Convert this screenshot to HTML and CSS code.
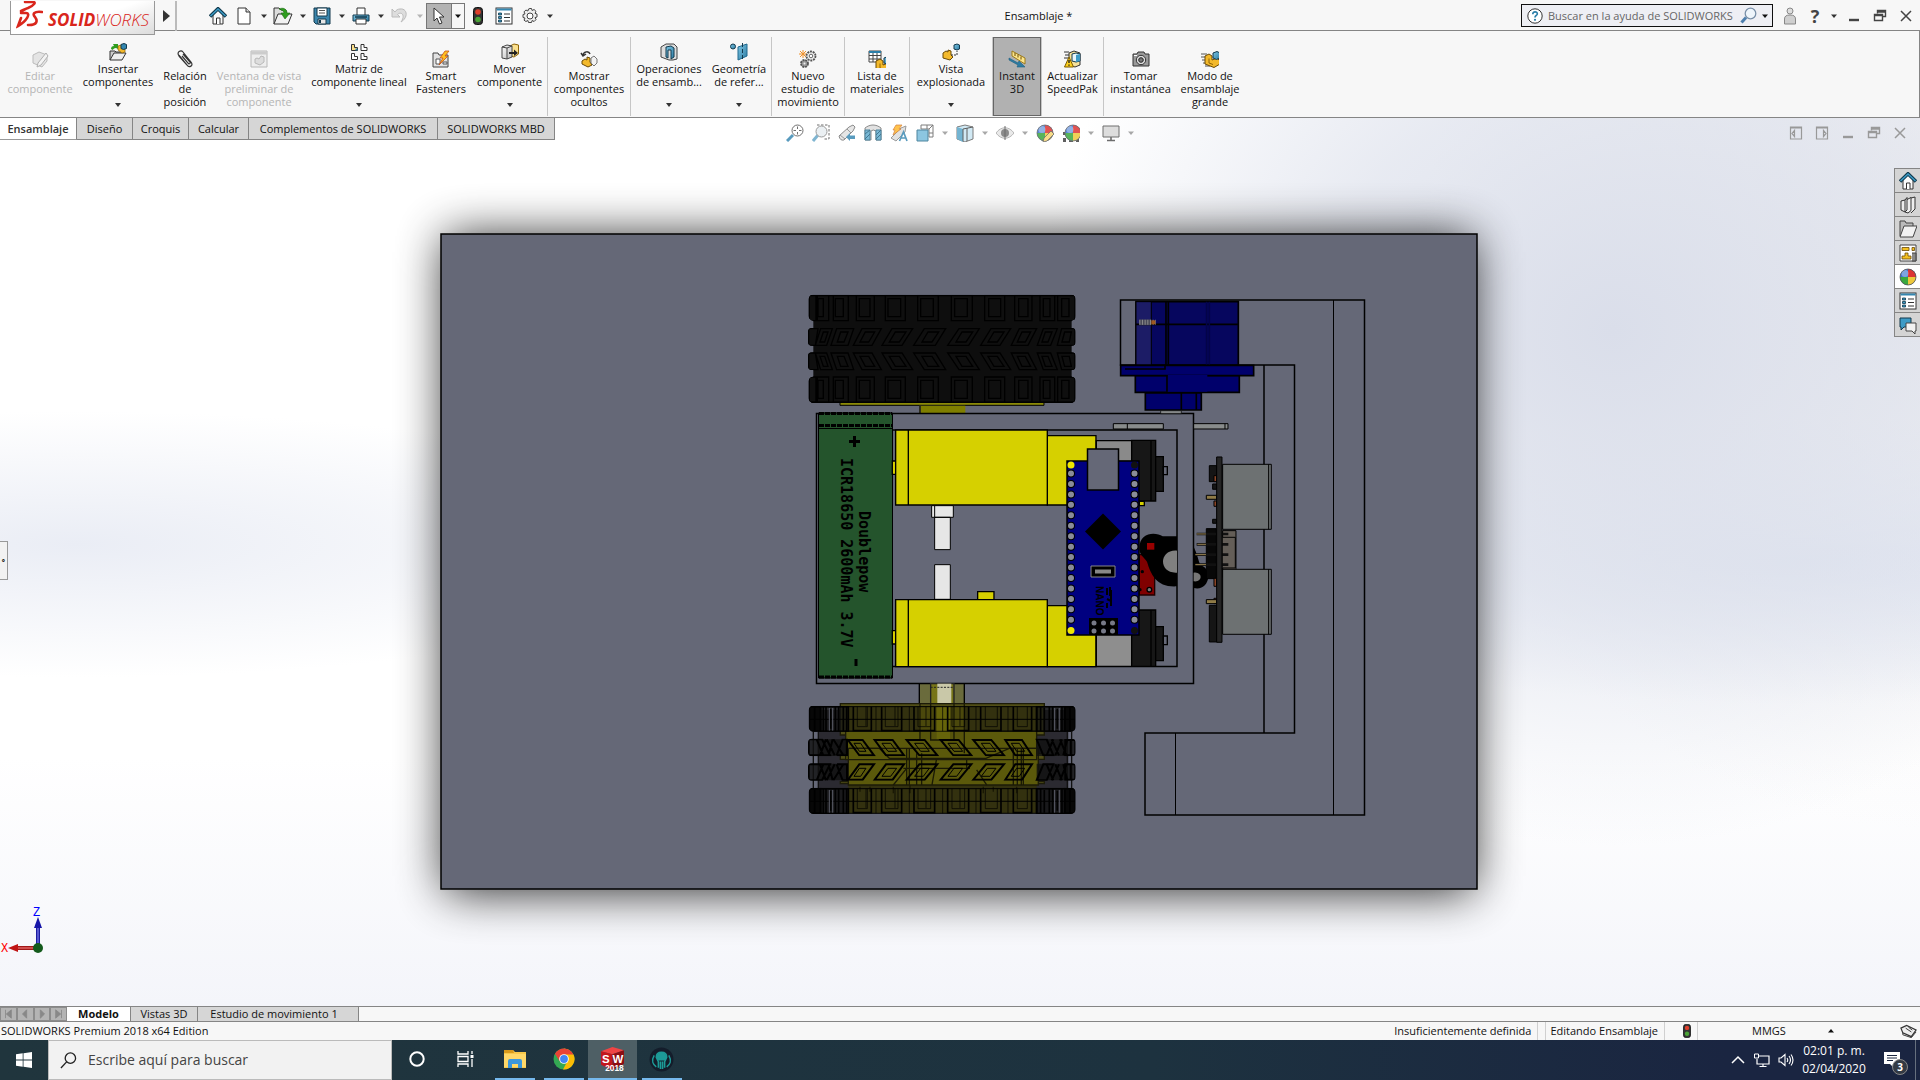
FILE: index.html
```html
<!DOCTYPE html>
<html lang="es">
<head>
<meta charset="utf-8">
<meta name="viewport" content="width=device-width, initial-scale=1">
<title>Ensamblaje - SOLIDWORKS</title>
<link rel="stylesheet" href="styles.css">
</head>
<body>
<svg class="defs" aria-hidden="true">
  <defs>
    <linearGradient id="steel" x1="0" y1="0" x2="1" y2="1"><stop offset="0" stop-color="#fff"/><stop offset="1" stop-color="#b9b9b9"/></linearGradient>
    <linearGradient id="blue" x1="0" y1="0" x2="1" y2="1"><stop offset="0" stop-color="#7cc6e4"/><stop offset="1" stop-color="#2e7ca3"/></linearGradient>
    <symbol id="home" viewBox="0 0 18 18"><path d="M4 8v9h10V8L9 3z" fill="#fafafa" stroke="#333"/><path d="M7.500 17v-6h3.500v6" fill="#fff" stroke="#333"/><path d="M1 9.500 9 1.800l8 7.700" fill="none" stroke="#12394d" stroke-width="3.600"/><path d="M1.500 9 9 2l7.500 7" fill="none" stroke="#3c9cc6" stroke-width="1.500"/></symbol>
    <symbol id="light" viewBox="0 0 10 18"><rect x=".5" y=".5" width="9" height="17" rx="3" fill="#333" stroke="#111"/><circle cx="5" cy="5" r="2.800" fill="#e0402c"/><circle cx="5" cy="12.500" r="2.800" fill="#4aa336"/></symbol>
    <symbol id="props" viewBox="0 0 18 18"><rect x="1" y="1" width="16" height="16" fill="#fff" stroke="#333"/><path d="M1.500 2.500h15" stroke="#3487b0" stroke-width="2"/><path d="M3.500 6h3v2h-3zM3.500 9.500h3v2h-3zM3.500 13h3v2h-3z" fill="#3d9bc6" stroke="#12394d" stroke-width=".8"/><path d="M9 7h6M9 10.500h6M9 14h6" stroke="#333"/></symbol>
    <symbol id="part" viewBox="0 0 18 18"><path d="M2 6l4-2 3 2v4l5-2 3 3v3l-6 3.500L2 14z" fill="#f3b92b" stroke="#6b4a05"/><path d="M6 8.500V13l4 1.500" fill="none" stroke="#8f6406"/><path d="M10 3l4-1.500L17 3v5l-3.500 1.500L10 8z" fill="url(#blue)" stroke="#12394d"/></symbol>
    <symbol id="ball" viewBox="0 0 18 18"><circle cx="9" cy="9" r="8" fill="#3b73d0"/><path d="M9 9V1a8 8 0 0 1 8 8z" fill="#dc3434"/><path d="M9 9h8a8 8 0 0 1-8 8z" fill="#eec83c"/><path d="M9 9v8a8 8 0 0 1-8-8z" fill="#3aa83f"/><circle cx="6" cy="5.500" r="3.500" fill="#fff" opacity=".35"/><circle cx="9" cy="9" r="8" fill="none" stroke="#555" stroke-width=".8"/></symbol>
    <symbol id="restore" viewBox="0 0 14 14"><path d="M4.500 4.500v-3h8v6h-3M4.500 3h8" fill="none" stroke="currentColor" stroke-width="1.400"/><path d="M1.500 5.500h8v6h-8zM1.500 6.500h8" fill="none" stroke="currentColor" stroke-width="1.400"/></symbol>
    <symbol id="close" viewBox="0 0 14 14"><path d="M2 2l10 10M12 2 2 12" stroke="currentColor" stroke-width="1.500"/></symbol>
    <symbol id="min" viewBox="0 0 14 14"><path d="M2 11h10" stroke="currentColor" stroke-width="2.400"/></symbol>
    <symbol id="caret" viewBox="0 0 6 4"><path d="M0 .5h6L3 4z" fill="currentColor"/></symbol>
    <symbol id="book" viewBox="0 0 18 18"><path d="M2 5l4-1v12l-4-2zM6 4l2-2.500V14l-2 2M8 3.500l4-2v13L9 17l-3-1M12 2l4-1v12l-4 4" fill="#eee" stroke="#333" stroke-linejoin="round"/></symbol>
  </defs>
</svg>

<header class="titlebar">
  <div class="brand">
    <svg class="brand-mark" viewBox="0 0 27 28"><path d="M9 1h8c3 0 2 3-5 6-3 1-4 2-7 3M5 12h5c5 0 1 8-8 13l3-8M26 11c-8-1-10 2-7 5 3 4 2 8-6 8h-1" fill="none" stroke="#d9261c" stroke-width="2.600" stroke-linecap="round"/></svg>
    <span class="brand-name"><b>SOLID</b>WORKS</span>
  </div>
  <button class="flyout" aria-label="Menú"><svg viewBox="0 0 7 12"><path d="M0 0l7 6-7 6z" fill="#333"/></svg></button>
  <nav class="quick">
    <button class="q" aria-label="Inicio"><svg class="i18"><use href="#home"/></svg></button>
    <button class="q" aria-label="Nuevo"><svg class="i18" viewBox="0 0 18 18"><path d="M3 1h8l4 4v12H3z" fill="#fff" stroke="#333"/><path d="M11 1v4h4" fill="#ddd" stroke="#333"/></svg></button>
    <button class="q-more" aria-label="Más"><svg class="caret"><use href="#caret"/></svg></button>
    <button class="q" aria-label="Abrir"><svg class="i20" viewBox="0 0 20 18"><path d="M1 17V1h5l2 2h5v4" fill="#ddd" stroke="#333"/><path d="M1 17 5 7h14l-4 10z" fill="#f2f2f2" stroke="#333"/><path d="M6 2c4-2 8 0 8 4h3l-5 6-4-6h3c0-2-2-3-5-4z" fill="#2f9d1f" stroke="#1b6a10" stroke-width=".6"/></svg></button>
    <button class="q-more" aria-label="Más"><svg class="caret"><use href="#caret"/></svg></button>
    <button class="q" aria-label="Guardar"><svg class="i18" viewBox="0 0 18 18"><path d="M1 1h16v16H3l-2-2z" fill="#3c86ad" stroke="#12394d"/><path d="M4 1h10v8H4z" fill="#fff" stroke="#12394d"/><path d="M6 3.500h6M6 6h6" stroke="#555"/><path d="M5 12h8v5H5z" fill="#e8e8e8" stroke="#12394d"/><path d="M7 13v3" stroke="#12394d" stroke-width="2"/></svg></button>
    <button class="q-more" aria-label="Más"><svg class="caret"><use href="#caret"/></svg></button>
    <button class="q" aria-label="Imprimir"><svg class="i18" viewBox="0 0 18 18"><path d="M5 1h8v8H5z" fill="#fff" stroke="#333"/><path d="M1 8h16v6H1z" fill="url(#blue)" stroke="#12394d"/><path d="M4 12h10v5H4z" fill="#fff" stroke="#333"/><path d="M3 10h12" stroke="#12394d" stroke-width="1.500"/></svg></button>
    <button class="q-more" aria-label="Más"><svg class="caret"><use href="#caret"/></svg></button>
    <button class="q off" aria-label="Deshacer" disabled><svg class="i18" viewBox="0 0 18 18"><path d="M1 2v8h8L6.500 7.500C10 4 15 8 10 15c8-5 6-14-1-13-2 0-4 1-5 3z" fill="#ddd" stroke="#bbb"/></svg></button>
    <button class="q-more off" aria-label="Más" disabled><svg class="caret"><use href="#caret"/></svg></button>
    <button class="select" aria-label="Seleccionar"><svg viewBox="0 0 14 18"><path d="M2 1v13l3-3 2.500 6 2.500-1-2.500-6H12z" fill="#fff" stroke="#333"/></svg></button>
    <button class="select-more" aria-label="Más"><svg class="caret"><use href="#caret"/></svg></button>
    <button class="q" aria-label="Reconstruir"><svg class="i10"><use href="#light"/></svg></button>
    <button class="q" aria-label="Propiedades"><svg class="i18"><use href="#props"/></svg></button>
    <button class="q" aria-label="Opciones"><svg class="i18" viewBox="0 0 18 18"><path d="M9 1.500l1.500 0 .6 2 2-1 1.900 1.900-1 2 2 .6v3l-2 .6 1 2-1.900 1.900-2-1-.6 2h-3l-.6-2-2 1L3 13.100l1-2-2-.6v-3l2-.6-1-2 1.900-1.900 2 1 .6-2z" fill="#eee" stroke="#444" stroke-linejoin="round"/><circle cx="9" cy="9" r="3" fill="#fff" stroke="#444"/></svg></button>
    <button class="q-more" aria-label="Más"><svg class="caret"><use href="#caret"/></svg></button>
  </nav>
  <h1 class="doc-title">Ensamblaje *</h1>
  <form class="help-search">
    <svg viewBox="0 0 16 16"><circle cx="8" cy="8" r="7.200" fill="#fff" stroke="#333"/><path d="M5.800 6.200C5.800 3 10.500 3.300 10.300 6 10.100 7.500 8 7.500 8 9.500" fill="none" stroke="#2b7ea8" stroke-width="1.700"/><circle cx="8" cy="11.800" r="1.100" fill="#2b7ea8"/></svg>
    <input type="text" placeholder="Buscar en la ayuda de SOLIDWORKS" aria-label="Buscar en la ayuda de SOLIDWORKS">
    <button type="button" aria-label="Buscar"><svg viewBox="0 0 17 17"><path d="M1.500 15.500 6 10.500" stroke="#4d7fae" stroke-width="3"/><circle cx="10.500" cy="6.500" r="5.300" fill="#eef5fb" stroke="#7990a8" stroke-width="1.300"/></svg></button>
    <button type="button" class="search-more" aria-label="Más"><svg class="caret"><use href="#caret"/></svg></button>
  </form>
  <div class="window-ctl">
    <button aria-label="Usuario"><svg class="user" viewBox="0 0 14 18"><circle cx="7" cy="4" r="3" fill="#ddd" stroke="#888"/><path d="M1.500 17v-5c0-3 2-4 5.500-4s5.500 1 5.500 4v5z" fill="#cfcfcf" stroke="#888"/></svg></button>
    <button class="help" aria-label="Ayuda">?</button>
    <button class="q-more" aria-label="Más"><svg class="caret"><use href="#caret"/></svg></button>
    <button aria-label="Minimizar"><svg class="i14"><use href="#min"/></svg></button>
    <button aria-label="Restaurar"><svg class="i14"><use href="#restore"/></svg></button>
    <button aria-label="Cerrar"><svg class="i14"><use href="#close"/></svg></button>
  </div>
</header>

<div class="ribbon">
  <div class="group g1">
    <button class="tool off" disabled><svg viewBox="0 0 18 18"><path d="M2 5l6-3 8 3v6l-5 6-9-4z" fill="#e4e4e4" stroke="#bbb"/><path d="M15 3 7 13l-1 4 4-2 7-9z" fill="#f4f4f4" stroke="#b0b0b0"/></svg><span>Editar<br>componente</span></button>
    <button class="tool drop"><svg viewBox="0 0 18 18"><path d="M1 17V8h5l1 1h7v3" fill="#ccc" stroke="#333"/><path d="M1 17l4-7h12l-4 7z" fill="#eee" stroke="#333"/><path d="M2 6c0-2 1-3 3-3l-1-2h5v5L7 5C5 5 4 6 4 7z" fill="#2f9d1f"/><path d="M9 3l3-1 1 2 3 2v3l-3 1-4-3z" fill="#f3b92b" stroke="#8f6406" stroke-width=".7"/><path d="M12 1.500l3-1 2.500 1v4l-3 1-2.500-1z" fill="#3487b0" stroke="#12394d"/></svg><span>Insertar<br>componentes</span></button>
    <button class="tool"><svg viewBox="0 0 18 18"><path d="M3 5 11 15c2 3 7 1 4-3L7 2C5-.5 0 2 3 6l8 9M6 6l6 7c1 2 3 0 2-1L7 4" fill="none" stroke="#333" stroke-width="1.200"/></svg><span>Relación<br>de<br>posición</span></button>
    <button class="tool off" disabled><svg viewBox="0 0 18 18"><path d="M1 1h16v16H1z" fill="#eee" stroke="#b8b8b8"/><path d="M1 3h16" stroke="#ccc" stroke-width="3"/><path d="M5 9l2-1 2 1 2-3 3 1v5l-4 3-5-2z" fill="#ddd" stroke="#b8b8b8"/></svg><span>Ventana de vista<br>preliminar de<br>componente</span></button>
    <button class="tool drop"><svg viewBox="0 0 18 18"><g fill="#fff" stroke="#333"><path d="M1.500 1.500h3v3h3v3h-6z" fill="#f9df8a"/><path d="M11 1.500h3v3h3v3h-6zM1.500 10.500h3v3h3v3h-6zM11 10.500h3v3h3v3h-6z"/></g><path d="M5.500 5.500h2v2h-2z" fill="#2b7ea8"/></svg><span>Matriz de<br>componente lineal</span></button>
    <button class="tool"><svg viewBox="0 0 18 18"><path d="M1 17V3h5l1 2h9v12z" fill="#e2e2e2" stroke="#444"/><path d="M4 9h4v5H4zM11 12h4v2h-4z" fill="#fff" stroke="#555"/><path d="M13 1h4l-4 5h3l-9 9 4-7H8z" fill="#ffbf1f" stroke="#c4501c" stroke-width=".8"/></svg><span>Smart<br>Fasteners</span></button>
    <button class="tool drop"><svg viewBox="0 0 18 18"><path d="M9 3l4-2 4.500 1v9L13 14l-4-1z" fill="#fbe08d" stroke="#8f6406"/><path d="M1 4l5-2 5 1v11l-5 2-5-1z" fill="url(#steel)" stroke="#444"/><path d="M1 4l5 1v11M6 5l5-2" fill="none" stroke="#444"/><path d="M8 9h5V6.500L17 10l-4 3v-2H8z" fill="#222"/></svg><span>Mover<br>componente</span></button>
  </div>
  <div class="group g2"><button class="tool"><svg viewBox="0 0 18 18"><path d="M3 5c1-4 6-4 7-1M1 3l2 3 3-2" fill="none" stroke="#333" stroke-width="1.500"/><path d="M2 11l3-2 2 1V7l3 1v4l2 3-4 2-6-3z" fill="#f3b92b" stroke="#6b4a05"/><path d="M11 8l3-2 3 3v4l-3 3-3-3z" fill="#f2f2f2" stroke="#777"/></svg><span>Mostrar<br>componentes<br>ocultos</span></button></div>
  <div class="group g3">
    <button class="tool drop"><svg viewBox="0 0 18 18"><path d="M1 4l5-3h8l3 3v12l-4 1H9L1 14z" fill="#ddd" stroke="#444"/><path d="M6 4l5-1 3 2v9l-3 2V7H8v8l-2-1z" fill="url(#blue)" stroke="#12394d"/></svg><span>Operaciones<br>de ensamb...</span></button>
    <button class="tool drop"><svg viewBox="0 0 18 18"><circle cx="3" cy="3.500" r="2.500" fill="url(#blue)" stroke="#12394d"/><path d="M8 4l9-3v12l-9 4z" fill="url(#blue)" stroke="#206a90"/><path d="M12.500 0v18" stroke="#12394d" stroke-dasharray="4 2"/></svg><span>Geometría<br>de refer...</span></button>
  </div>
  <div class="group g4"><button class="tool"><svg viewBox="0 0 18 18"><path d="M4 0v8M0 4h8M1 1l6 6M7 1 1 7" stroke="#f0902a"/><circle cx="12" cy="6" r="4.500" fill="#f0f0f0" stroke="#555" stroke-width="1.800" stroke-dasharray="2 .8"/><circle cx="12" cy="6" r="1.800" fill="#fff" stroke="#666"/><circle cx="5.500" cy="13.500" r="3.500" fill="#999" stroke="#555" stroke-width="1.800" stroke-dasharray="2 .8"/><circle cx="5.500" cy="13.500" r="1" fill="#eee"/></svg><span>Nuevo<br>estudio de<br>movimiento</span></button></div>
  <div class="group g5"><button class="tool"><svg viewBox="0 0 18 18"><path d="M1 1h12v11H1zM1 5.500h12M1 9h12M5 3v9M9 3v9" fill="#fff" stroke="#444"/><path d="M1 2h12" stroke="#2b7ea8" stroke-width="2"/><svg x="6" y="5" width="12" height="13"><use href="#part"/></svg></svg><span>Lista de<br>materiales</span></button></div>
  <div class="group g6"><button class="tool drop"><svg viewBox="0 0 18 18"><path d="M1 10l3-2 2 1V7l3 1v4l2 2-3 3-7-2z" fill="#f3b92b" stroke="#6b4a05"/><path d="M12 2l3-1 2.500 1v4L15 7l-3-1z" fill="url(#blue)" stroke="#12394d"/><path d="M9 12h6V8" fill="none" stroke="#333" stroke-dasharray="2 1"/></svg><span>Vista<br>explosionada</span></button></div>
  <div class="group g7"><button class="tool pressed"><svg viewBox="0 0 18 18"><path d="M4 1l13 7v6L4 6z" fill="#fde58a" stroke="#9b7a1a"/><path d="M7 3v3M10 4.500v3M13 6.500v3" stroke="#6b4a05"/><path d="M1 8l9 5 1-2 6 6-8 0 1-2-9-5z" fill="#2e7ca3" stroke="#1e5f80" stroke-width=".6"/></svg><span>Instant<br>3D</span></button></div>
  <div class="group g8"><button class="tool"><svg viewBox="0 0 18 18"><path d="M5 3l5-2 6 2v12l-5 2-6-2z" fill="#f7e29a" stroke="#333"/><path d="M8 4l4-1 4 1v7l-4 1-4-1z" fill="#e7f5fb" stroke="#12394d"/><path d="M12 5v7l4-1V4z" fill="#3d9bc6"/><path d="M0 2h5M1 5h4M0 8h4" stroke="#333"/><path d="M5 7l4.500 10h-9z" fill="#ffd21e" stroke="#7a5a00"/><path d="M5 10v3M5 14.500v1.200" stroke="#222" stroke-width="1.400"/></svg><span>Actualizar<br>SpeedPak</span></button></div>
  <div class="group g9">
    <button class="tool"><svg viewBox="0 0 18 18"><path d="M1 4h4l1-2h6l1 2h4v12H1z" fill="#9a9a9a" stroke="#333"/><circle cx="9" cy="10" r="4.700" fill="#ddd" stroke="#333"/><circle cx="9" cy="10" r="2.300" fill="#777" stroke="#222"/><path d="M2 5.500h3" stroke="#fff"/></svg><span>Tomar<br>instantánea</span></button>
    <button class="tool"><svg viewBox="0 0 18 18"><path d="M0 4h6M0 7h5M1 10h4M2 13h4M4 16h5" stroke="#555"/><svg x="2" y="0" width="16" height="17"><use href="#part"/></svg></svg><span>Modo de<br>ensamblaje<br>grande</span></button>
  </div>
</div>

<main class="viewport">
  <svg class="scene" viewBox="0 118 1920 888" preserveAspectRatio="xMidYMid slice" role="img" aria-label="Ensamblaje">
    <defs>
      <filter id="soft" x="-20%" y="-20%" width="140%" height="140%"><feGaussianBlur stdDeviation="24"/></filter>
      <clipPath id="rear-shape"><rect x="86" y="44" width="801" height="78" rx="14"/><rect x="84" y="144" width="803" height="53" rx="12"/><rect x="84" y="217" width="803" height="53" rx="12"/><rect x="86" y="290" width="801" height="79" rx="14"/><rect x="100" y="60" width="775" height="290"/></clipPath>
      <clipPath id="front-shape"><rect x="86" y="497" width="801" height="78" rx="14"/><rect x="84" y="596" width="803" height="53" rx="12"/><rect x="84" y="669" width="803" height="53" rx="12"/><rect x="86" y="743" width="801" height="79" rx="14"/></clipPath>
      <g id="blocks" fill="#0f0f0f" stroke="#000" stroke-width="4">
        <path d="M88 0h24v76H88zM108 0h38v76h-38zM160 0h45v76h-45zM229 0h54v76h-54zM316 0h60v76h-60zM413 0h62v76h-62zM514 0h63v76h-63zM614 0h60v76h-60zM704 0h52v76h-52zM780 0h44v76h-44zM833 0h52v76h-52z"/>
        <path d="M114 10h16v54h-16zM166 10h24v54h-24zM238 10h32v54h-32zM324 10h38v54h-38zM422 10h38v54h-38zM524 10h38v54h-38zM626 10h36v54h-36zM716 10h28v54h-28zM790 10h20v54h-20zM845 10h22v54h-22z"/>
      </g>
      <g id="slants" fill="#0f0f0f" stroke="#000" stroke-width="4">
        <path d="M86 50V0h28l-8 50zM106 50l16-50h35l-17 50zM153 50l17-50h51l-17 50zM220 50l26-50h58l-28 50zM306 50l30-50h62l-32 50zM401 50l32-50h64l-31 50zM503 50l34-50h61l-32 50zM602 50l31-50h59l-32 50zM694 50l24-50h52l-26 50zM772 50l18-50h42l-20 50zM832 50l13-50h40v50z"/>
        <path d="M120 40l10-30h14l-10 30zM172 40l10-30h22l-12 30zM240 40l16-30h28l-18 30zM328 40l18-30h32l-20 30zM426 40l18-30h32l-20 30zM528 40l18-30h32l-20 30zM624 40l18-30h30l-20 30zM712 40l14-30h26l-16 30zM786 40l10-30h20l-12 30zM846 40l8-30h20l-6 30z"/>
      </g>
      <g id="ghost-blocks" fill="none" stroke="#000" stroke-width="5">
        <path d="M88 0h34v74H88zM854 0h32v74h-32z" fill="#070707"/>
        <path d="M122 0h83v74h-83zM770 0h84v74h-84z" fill="#141414" fill-opacity=".75"/>
        <path d="M104 0v74M130 0v74M138 0v74M152 6v60M166 0v74M176 0v74M190 0v74M200 0v74M220 0v72h54V0M305 0v72h60V0M402 0v72h62V0M503 0v72h63V0M602 0v72h61V0M700 0v72h55V0M770 0v74M782 0v74M793 4v68M808 0v74M818 0v74M832 6v60M846 0v74M870 0v74"/>
        <path d="M88 0h797M88 38h797M88 74h797" stroke-width="3"/>
        <path d="M148 4v68M158 4v68M824 4v68M838 4v68" stroke="#5a5c68" stroke-width="3"/>
        <path d="M232 0v60h30V0M258 0v58M316 0v60h38V0M345 0v58M414 0v60h38V0M438 0v58M516 0v60h38V0M540 0v58M616 0v60h36V0M712 0v60h30V0M288 0v74M388 0v74M488 0v74M588 0v74M684 0v74" stroke-width="3" opacity=".7"/>
      </g>
      <g id="ghost-slants" fill="none" stroke="#000" stroke-width="6">
        <path d="M86 0h118v50H86zM770 0h116v50H770z" fill="#101010" fill-opacity=".8" stroke="none"/>
        <path d="M204 2h44l34 46h-44zM284 2h54l34 46h-54zM380 2h54l38 46h-54zM482 2h54l38 46h-54zM580 2h54l38 46h-54zM676 2h50l30 46h-50z"/>
        <path d="M86 0h40l24 48H86zM110 0l20 48M140 0l24 48M160 0l30 48M170 48l18-48M120 48l18-48M146 48l12-48M185 0h16v48h-30M770 0h30l20 48h-30zM800 48l20-48M815 0l22 48M826 48l20-48M840 0l20 48M850 48l12-48M856 2h30v46h-30zM872 0v48"/>
        <path d="M222 12h20l16 24h-20zM306 12h26l18 24h-26zM404 12h26l18 24h-26zM504 12h26l18 24h-26zM604 12h26l18 24h-26zM694 12h24l16 24h-24z" stroke-width="3"/>
      </g>
    </defs>
    <rect x="445" y="236" width="1028" height="656" fill="#000" opacity=".85" filter="url(#soft)"/>
    <rect x="441" y="234" width="1036" height="655" fill="#656877" stroke="#000" stroke-width="1.500"/>

    <!-- bracket -->
    <g fill="none" stroke="#000">
      <path d="M1120.500 365V300H1364.500V815H1145V733H1294.500V365z" stroke-width="1.500"/>
      <path d="M1264 365v368" stroke-width="1.500"/>
      <path d="M1333.500 300v515M1175.500 733v82"/>
    </g>

    <!-- rear wheel -->
    <g transform="translate(780 280) scale(.3333)">
      <path d="M180 366h612v10H180z" fill="#8b8a08" stroke="#000" stroke-width="3"/>
      <path d="M418 377h138v22H418z" fill="#7f7f00"/><path d="M420 377v22" stroke="#222" stroke-width="5"/>
      <g clip-path="url(#rear-shape)">
        <path d="M84 44h803v325H84z" fill="#0e0e0e"/>
        <use href="#blocks" y="46"/><use href="#slants" y="146"/>
        <use href="#slants" transform="translate(0 269) scale(1 -1)"/><use href="#blocks" y="291"/>
        <path d="M86 46h800M86 367h800" stroke="#000" stroke-width="5"/>
      </g>
    </g>

    <!-- chassis and battery -->
    <path d="M816.500 413.500H1193.500V683.500H816.500zM890 430H1177V666.500H890" fill="none" stroke="#000" stroke-width="1.500"/>
    <g>
      <path d="M818.500 413v265h74V413z" fill="#24542c" stroke="#000"/>
      <path d="M819 413.500h73M819 677h73M819 425.500h73" stroke="#000" stroke-width="3" stroke-dasharray="5 1"/>
      <path d="M819 428.500h73" stroke="#000"/>
      <path d="M849 441.500h11M854.500 436v11M856 659v7" stroke="#000" stroke-width="3"/>
      <text class="cell-text" transform="translate(841 458) rotate(90)">ICR18650 2600mAh 3.7V</text>
      <text class="cell-text" transform="translate(859 511) rotate(90)">Doublepow</text>
    </g>

    <!-- gear motors -->
    <g transform="translate(780 280) scale(.3333)" stroke="#000" stroke-width="4">
      <path d="M337 543h10v40h-10zM802 467h146v208H802z" fill="#d6d000"/>
      <path d="M347 450h455v225H347zM385 450v225" fill="#d6d000"/>
      <path d="M455 677h65v35h-65zM464 712h47v97h-47zM464 677v35" fill="#e6e6e6" stroke-width="3"/>
    </g>
    <g transform="translate(780 540) scale(.3333)" stroke="#000" stroke-width="4">
      <path d="M464 74h47v104h-47z" fill="#e6e6e6" stroke-width="3"/>
      <path d="M593 155h49v25h-49zM337 272h10v40h-10zM802 197h146v183H802z" fill="#d6d000"/>
      <path d="M347 179h455v201H347zM385 179v201" fill="#d6d000"/>
    </g>
    <g transform="translate(1040 280) scale(.3333)" stroke="#000" stroke-width="4">
      <path d="M169 482h106v62H169z" fill="#8a8a8a"/><path d="M275 481h72v182h-72zM347 530h23v104h-23zM333 481v182" fill="#171717"/>
      <path d="M370 560h12v24h-12z" fill="#656877"/><path d="M298 664h15v13h-15z" fill="#d6d000"/>
    </g>
    <g transform="translate(1040 520) scale(.3333)" stroke="#000" stroke-width="4">
      <path d="M169 340h106v99H169z" fill="#8e8e8e"/><path d="M275 270h72v169h-72zM347 320h23v102h-23zM333 270v169" fill="#171717"/>
      <path d="M370 348h12v26h-12z" fill="#656877"/>
    </g>

    <!-- line sensor and caster -->
    <g transform="translate(1040 520) scale(.3333)">
      <path d="M298 104h46v121h-46z" fill="#800000" stroke="#200000" stroke-width="4"/>
      <path d="M298 85c0-50 50-50 70-36h43v150c-60 4-78-34-90-74-10-14-23-20-23-40z" fill="#000"/>
      <path d="M411 92c-56-4-56 70 0 66z" fill="#808080"/>
      <path d="M321 69h22v20h-22z" fill="#980000"/>
      <circle cx="307" cy="155" r="5"/><circle cx="300" cy="209" r="5"/><circle cx="328" cy="209" r="7" fill="#777" stroke="#000" stroke-width="4"/>
      <path d="M461 80c10 20 14 40 20 56 40 10 28 80-20 68z" fill="#000"/><path d="M461 158c28-4 28 30 0 26z" fill="#777"/>
    </g>

    <!-- controller board -->
    <g>
      <path d="M1067 461h72v174h-72z" fill="#000080" stroke="#000" stroke-width="1.500"/>
      <path d="M1087.500 449h31v41h-31z" fill="#656877" stroke="#000" stroke-width="1.500"/>
      <g fill="none" stroke-linecap="round">
        <path d="M1071 473.500v147M1134.500 473.500v147" stroke="#000" stroke-width="8" stroke-dasharray="0 10.450"/>
        <path d="M1071 473.500v147M1134.500 473.500v147" stroke="#8a8c98" stroke-width="6" stroke-dasharray="0 10.450"/>
      </g>
      <circle cx="1071" cy="465" r="3.500" fill="#f0e800"/><circle cx="1071" cy="630.500" r="3.500" fill="#f0e800"/>
      <circle cx="1134.500" cy="465" r="3.500" fill="#111"/><circle cx="1134.500" cy="630.500" r="3.500" fill="#111"/>
      <path d="M1103 513.500l18 18-18 18-18-18z" fill="#000"/>
      <path d="M1091 566h24v11h-24z" fill="#000" stroke="#888" stroke-width="1"/><path d="M1095 569.500h16v4h-16z" fill="#888"/>
      <text class="board-text" transform="translate(1096 586) rotate(90)">NANO</text>
      <path d="M1107 588v7M1110 587v9M1107 599l4 2M1107 603v5M1111 590v16" stroke="#000" stroke-width="2"/>
      <path d="M1089 618h29v17h-29z" fill="#000"/>
      <g fill="#777a88"><circle cx="1094" cy="623" r="2.500"/><circle cx="1103.500" cy="623" r="2.500"/><circle cx="1112.500" cy="623" r="2.500"/><circle cx="1094" cy="631" r="2.500"/><circle cx="1103.500" cy="631" r="2.500"/><circle cx="1112.500" cy="631" r="2.500"/></g>
    </g>

    <!-- servo -->
    <g transform="translate(1040 280) scale(.3333)" stroke="#000" stroke-width="5">
      <path d="M288 65h307v190H288z" fill="#06065e"/><path d="M288 65h46v190h-46z" fill="#1c1c66" stroke-width="3"/>
      <path d="M378 65v190M385 65v190M288 133h307" fill="none"/><path d="M500 65v190M508 65v190" stroke="#030348" fill="none"/>
      <path d="M286 286h312v51H286z" fill="#00006b"/><path d="M242 256h399v31H242z" fill="#00006b"/><path d="M382 285h120v50H382z" fill="#00006b" stroke="none"/>
      <path d="M381 285v50M255 267h120v-10" fill="none"/>
      <path d="M316 339h168v51H316zM424 339v51M469 339v51" fill="#00006b"/>
      <path d="M362 392h62v9h-62z" fill="#858888" stroke-width="2"/>
      <path d="M298 127h36" stroke="#4a4a58" stroke-width="17"/><path d="M298 127h50" stroke="#8a8a8a" stroke-width="15" stroke-dasharray="3 5"/><path d="M334 127h12" stroke="#a05a20" stroke-width="12"/>
      <path d="M220 431h150v16H220zM461 431h103v16H461zM262 431v16M555 431v16" fill="#898c8c" stroke-width="3"/>
    </g>

    <!-- ultrasonic sensor -->
    <g transform="translate(1040 280) scale(.3333)" stroke="#000" stroke-width="3">
      <path d="M508 557h22v48h-22zM518 612h12v16h-12zM518 718h12v12h-12z" fill="#151515"/>
      <path d="M522 587h8v18h-8zM522 663h8v16h-8z" fill="#8a4426"/><path d="M499 646h31v12h-31z" fill="#8f7b47"/>
      <path d="M548 553h146v195H548zM686 553v195" fill="#6d7172"/>
      <path d="M548 752h40v140h-40z" fill="#645e58"/><path d="M548 772h38v92h-38" fill="#645e58"/>
      <path d="M499 746h30v150h-30z" fill="#080808"/>
      <path d="M470 762h95M470 793h95M466 824h99M466 854h99" stroke="#111" stroke-width="8"/><path d="M470 762h28M472 793h26M466 824h32M466 854h32" stroke="#9a8450" stroke-width="3"/>
      <path d="M508 976h22v110h-22z" fill="#151515"/>
      <path d="M522 895h8v24h-8zM522 955h8v16h-8z" fill="#8a4426"/><path d="M499 959h31v12h-31z" fill="#8f7b47"/>
      <path d="M548 868h146v195H548zM686 868v195" fill="#6d7172"/>
      <path d="M530 531h16v556h-16z" fill="#252525"/>
    </g>

    <!-- front wheel -->
    <g transform="translate(780 540) scale(.3333)">
      <path d="M115 510h750v306H115z" fill="#2b2a31"/>
      <path d="M100 575v170M115 575v170M862 575v170M875 575v170" stroke="#111" stroke-width="4"/>
      <path d="M418 431h135v60H418z" fill="#6a6b3c" stroke="#000" stroke-width="4"/><path d="M452 431h70v60h-70z" fill="#777518" stroke="#222" stroke-width="4"/><path d="M472 431h42v80h-42z" fill="#c9c8a8"/>
      <path d="M452 442h70" stroke="#222" stroke-width="3" stroke-dasharray="6 4"/>
      <path d="M181 491h612v94H181zM181 640h612v18H181zM181 725h612v6H181z" fill="#514f17" stroke="#1c1b08" stroke-width="4"/>
      <path d="M205 500h565v320H205z" fill="#33310f"/>
      <path d="M197 573h573v86H197zM205 625h570v110H205z" fill="#5b590b" stroke="#1c1b08" stroke-width="4"/>
      <path d="M418 500h135v100H418z" fill="#55530c" opacity=".7"/><path d="M470 500h40v100h-40z" fill="#66640a"/>
      <path d="M420 490v110M452 490v110h70V490M553 490v150M208 625h90l30 30h240l50 0 70-30h80M370 685h200M380 625v110M388 625v110M410 640v95M425 640v95M700 625v110M712 625v110M724 625v110M730 625v110M400 655h160v30M340 735l40-50M470 655l-14 80M590 690l30 45M240 740v15M270 740v15M340 740v20M390 735v25M610 740v20M640 740v15M710 740v20" fill="none" stroke="#1a1905" stroke-width="4"/>
      <g clip-path="url(#front-shape)">
        <use href="#ghost-blocks" y="500"/><use href="#ghost-slants" y="598"/>
        <use href="#ghost-slants" transform="translate(0 721) scale(1 -1)"/><use href="#ghost-blocks" y="746"/>
      </g>
    </g>

    <!-- orientation triad -->
    <g>
      <path d="M38 948v-22" stroke="#1c1ca0" stroke-width="4"/><path d="M38 948v-22" stroke="#6a6ae0" stroke-width="1.500"/><path d="M38 917l4 11h-8z" fill="#1515a8"/>
      <path d="M36 948H17" stroke="#a01818" stroke-width="4"/><path d="M36 948H17" stroke="#e06060" stroke-width="1.500"/><path d="M8 948l10-4v8z" fill="#c01414"/>
      <circle cx="38" cy="948" r="5" fill="#145a1c"/>
      <text class="axis axis-z" x="33" y="916">Z</text><text class="axis axis-x" x="1" y="952">X</text>
    </g>
  </svg>

  <div class="view-head">
    <nav class="cmd-tabs">
      <button class="tab on">Ensamblaje</button><button class="tab">Diseño</button><button class="tab">Croquis</button><button class="tab">Calcular</button><button class="tab">Complementos de SOLIDWORKS</button><button class="tab">SOLIDWORKS MBD</button>
    </nav>
    <div class="view-tools">
      <button aria-label="Zoom para ajustar"><svg viewBox="0 0 18 18"><path d="M1 17l6-6" stroke="#3d8ab3" stroke-width="3"/><circle cx="11.500" cy="6.500" r="5.500" fill="#fff" stroke="#555"/><path d="M11.500 2.500v8M7.500 6.500h8" stroke="#555" stroke-dasharray="2.500 3"/></svg></button>
      <button aria-label="Zoom encuadre"><svg viewBox="0 0 18 18"><path d="M5 1h12v14h-5" fill="none" stroke="#555" stroke-dasharray="2.500 1.500"/><path d="M1 17l5-6" stroke="#6aa9c9" stroke-width="3"/><circle cx="9.500" cy="7.500" r="5.500" fill="#e8eef2" stroke="#888"/></svg></button>
      <button aria-label="Vista previa"><svg viewBox="0 0 18 18"><path d="M1 12 11 3l4-2 2 2-2 4L6 16q-4 1-5-4z" fill="#e2e2e2" stroke="#777"/><path d="M9 5l4 4M2 11l5 4" stroke="#888"/><path d="M8 13l4-4v2.500h5v3.500h-5V17z" fill="#3d8ab3"/></svg></button>
      <button aria-label="Vista de sección"><svg viewBox="0 0 18 18"><path d="M1 4c5-4 11-4 16 0v12h-5V7q-3-2-5 0v9H1z" fill="#ddd" stroke="#777"/><path d="M1 6h5v10H1zM12 6h5v10h-5z" fill="#62adcf" stroke="#31718f"/><path d="M1 10l5-4M1 15l5-5M12 11l5-5M12 15l5-5" stroke="#235f7d"/></svg></button>
      <button aria-label="Anotaciones"><svg viewBox="0 0 18 18"><path d="M1 14 11 4l5-2-1 6-9 9z" fill="#ddd" stroke="#888"/><path d="M6 1h6L9 5h2L3 11l2-5H3z" fill="#ffb92e" stroke="#cf6d1e" stroke-width=".7"/><path d="M9.500 17 13.500 8l3.500 9M11 14h5" fill="none" stroke="#3d8ab3" stroke-width="1.700"/></svg></button>
      <button aria-label="Orientación"><svg viewBox="0 0 18 18"><path d="M5 5V1h12v12h-4M5 5h8v8M13 5l4-4M11 1v4M13 9h4" fill="#fff" stroke="#666"/><path d="M1 6h11v11H1z" fill="#79bddc" stroke="#31718f"/></svg></button>
      <i><svg class="caret"><use href="#caret"/></svg></i>
      <button aria-label="Estilo de visualización"><svg viewBox="0 0 18 18"><path d="M1 3l8-2 8 2v12l-8 3-8-3z" fill="#c9e6f3" stroke="#666"/><path d="M1 3l6 2v13l-6-3z" fill="#5ba8cb"/><path d="M7 5l10-2M7 5v12M11 4v13" stroke="#444"/></svg></button>
      <i><svg class="caret"><use href="#caret"/></svg></i>
      <button aria-label="Ocultar o mostrar"><svg viewBox="0 0 18 18"><path d="M0 9c5-7 13-7 18 0-5 7-13 7-18 0z" fill="#e6e6e6" stroke="#aaa"/><circle cx="9" cy="9" r="4" fill="#777"/><path d="M9 2v14" stroke="#555"/></svg></button>
      <i><svg class="caret"><use href="#caret"/></svg></i>
      <button aria-label="Editar apariencia"><svg viewBox="0 0 18 18"><svg width="16" height="16"><use href="#ball"/></svg><path d="M15 7l3 3-7 7-4 1 1-4z" fill="#f7d774" stroke="#555" stroke-width=".8"/></svg></button>
      <button aria-label="Aplicar escena"><svg viewBox="0 0 18 18"><path d="M1 9h16v9H1z" fill="#fff"/><path d="M1 8h3v3H1zM14 8h3v3h-3zM4 11h3v3H4zM11 11h3v3h-3zM1 14h3v4H1zM7 14h4v4H7zM14 14h3v4h-3z" fill="#444"/><svg x="2" width="14" height="14"><use href="#ball"/></svg></svg></button>
      <i><svg class="caret"><use href="#caret"/></svg></i>
      <button aria-label="Configuración de vista"><svg viewBox="0 0 18 18"><path d="M1 2h16v11H1z" fill="#d8d8d8" stroke="#555"/><path d="M9 13v3M5 16.500h8" stroke="#555" stroke-width="1.600"/></svg></button>
      <i><svg class="caret"><use href="#caret"/></svg></i>
    </div>
    <div class="doc-ctl">
      <button aria-label="Panel izquierdo"><svg viewBox="0 0 14 14"><path d="M1.500 1h11v12h-11zM1 2h12M5.500 4.500v6L3 7.500z" fill="none" stroke="currentColor" stroke-width="1.200"/></svg></button>
      <button aria-label="Panel derecho"><svg viewBox="0 0 14 14"><path d="M1.500 1h11v12h-11zM1 2h12M8.500 4.500v6L11 7.500z" fill="none" stroke="currentColor" stroke-width="1.200"/></svg></button>
      <button aria-label="Minimizar documento"><svg><use href="#min"/></svg></button>
      <button aria-label="Restaurar documento"><svg><use href="#restore"/></svg></button>
      <button aria-label="Cerrar documento"><svg><use href="#close"/></svg></button>
    </div>
  </div>

  <nav class="task-pane">
    <button aria-label="Recursos"><svg><use href="#home"/></svg></button>
    <button aria-label="Biblioteca"><svg><use href="#book"/></svg></button>
    <button aria-label="Explorador"><svg viewBox="0 0 18 18"><path d="M1 16V1h5l1 2h7v4" fill="#bbb" stroke="#444"/><path d="M1 17l4-11h13l-4 11z" fill="#f2f2f2" stroke="#444"/></svg></button>
    <button aria-label="Paleta de vistas"><svg viewBox="0 0 18 18"><path d="M1 1h16v16H1z" fill="#fff" stroke="#444"/><path d="M3 3.500h7v3H3zM13 3.500h2.500v3H13zM6 9h3v3h3v3H3v-3h3z" fill="#f4c020" stroke="#6b4a05" stroke-width=".8"/><path d="M13 9h4v8h-4" fill="#888" stroke="#444"/></svg></button>
    <button class="on" aria-label="Apariencias"><svg><use href="#ball"/></svg></button>
    <button aria-label="Propiedades"><svg><use href="#props"/></svg></button>
    <button aria-label="Foro"><svg viewBox="0 0 18 18"><path d="M1 2h11v9H5l-3 3v-3H1z" fill="#3d9bc6" stroke="#12394d"/><path d="M7 7h10v8h-1v3l-3-3H7z" fill="#f2f2f2" stroke="#444"/></svg></button>
  </nav>
  <button class="tree-handle" aria-label="Árbol">⚬</button>
</main>

<nav class="sheet-tabs">
  <div class="steps">
    <button aria-label="Primero"><svg viewBox="0 0 14 12"><path d="M4 1v10M11 1v10L5 6z" fill="#888" stroke="#888"/></svg></button>
    <button aria-label="Anterior"><svg viewBox="0 0 14 12"><path d="M9 1v10L4 6z" fill="#888" stroke="#888"/></svg></button>
    <button aria-label="Siguiente"><svg viewBox="0 0 14 12"><path d="M5 1v10l5-5z" fill="#888" stroke="#888"/></svg></button>
    <button aria-label="Último"><svg viewBox="0 0 14 12"><path d="M10 1v10M3 1v10l6-5z" fill="#888" stroke="#888"/></svg></button>
  </div>
  <button class="sheet on">Modelo</button><button class="sheet">Vistas 3D</button><button class="sheet">Estudio de movimiento 1</button>
</nav>

<footer class="status">
  <span class="product">SOLIDWORKS Premium 2018 x64 Edition</span>
  <span class="cell">Insuficientemente definida</span>
  <span class="cell gap"></span>
  <span class="cell">Editando Ensamblaje</span>
  <span class="cell lamp"><svg><use href="#light"/></svg></span>
  <button class="units">MMGS<svg class="caret up"><use href="#caret"/></svg></button>
  <svg class="tag" viewBox="0 0 18 14"><path d="M1 4l6-3 10 5-5 7L3 9z" fill="#eee" stroke="#333" stroke-width="1.300"/><path d="M3 9v2l9 3 5-6M6 4l6 4M9 3l4 3" fill="none" stroke="#333"/></svg>
</footer>

<div class="taskbar">
  <button class="start" aria-label="Inicio"><svg viewBox="0 0 16 16"><path d="M0 2.200 6.700 1.300V7.600H0zM7.500 1.200 16 0v7.600H7.500zM0 8.400h6.700v6.300L0 13.800zM7.500 8.400H16V16l-8.500-1.200z" fill="#fff"/></svg></button>
  <label class="win-search"><svg viewBox="0 0 18 18"><circle cx="11" cy="6.500" r="5.500" fill="none" stroke="#222" stroke-width="1.400"/><path d="M7 10.500 1 17" stroke="#222" stroke-width="1.400"/></svg><input type="text" placeholder="Escribe aquí para buscar" aria-label="Escribe aquí para buscar"></label>
  <div class="apps">
    <button aria-label="Cortana"><svg viewBox="0 0 22 22"><circle cx="11" cy="11" r="6.700" fill="none" stroke="#fff" stroke-width="2"/></svg></button>
    <button aria-label="Vista de tareas"><svg viewBox="0 0 22 22"><path d="M3 3v3h10V3M3 19v-3h10v3M3 8.500h10v5H3zM17 3v3M17 11v8" fill="none" stroke="#fff" stroke-width="1.300"/><path d="M15.500 7h3v3h-3z" fill="#fff"/></svg></button>
    <button class="run" aria-label="Explorador de archivos"><svg viewBox="0 0 22 22"><path d="M0 2h9l2 2h11v16H0z" fill="#f7c84a"/><path d="M0 2h9l1 3H0z" fill="#d99a1b"/><path d="M0 6h22v13H0z" fill="#ffd868"/><path d="M4 20v-7q0-2 2-2h10q2 0 2 2v7h-4v-4H8v4z" fill="#3b97dd"/></svg></button>
    <button class="run" aria-label="Chrome"><svg viewBox="0 0 22 22"><circle cx="11" cy="11" r="10.500" fill="#34a853"/><path d="M11 .5a10.500 10.500 0 0 1-1 21L15 12l-4-5.500h9.500A10.500 10.500 0 0 1 10 21.500l5-9z" fill="#fbbc05"/><path d="M11 .5C7 .5 4 2.500 1.900 5.700L6.500 13 11 6.500h9.500C18.500 2.500 15 .5 11 .5z" fill="#ea4335"/><circle cx="11" cy="11" r="4.800" fill="#fff"/><circle cx="11" cy="11" r="3.900" fill="#4285f4"/></svg></button>
    <button class="run now" aria-label="SOLIDWORKS 2018"><svg class="big" viewBox="0 0 24 24"><path d="M1 4l11-4 11 3-11 4z" fill="#ef4444"/><path d="M1 4l11 3v15L1 17z" fill="#c4161c"/><path d="M23 3v13l-11 6V7z" fill="#8e0d12"/><text class="sw" x="2" y="15">S</text><text class="sw" x="12" y="15">W</text><text class="yr" x="5" y="23">2018</text></svg></button>
    <button class="run" aria-label="GitKraken"><svg class="big" viewBox="0 0 24 24"><circle cx="12" cy="12" r="11.500" fill="#141d2b"/><path d="M12 5c-4 0-5 3-5 5l2 4v6M12 5c4 0 5 3 5 5l-2 4v6M5 8c-3 5-1 9 2 11M19 8c3 5 1 9-2 11M11 14v7M13 14v7" fill="none" stroke="#1d9b98" stroke-width="1.500"/><path d="M12 5c-5 0-6 6-3 8h6c3-2 2-8-3-8z" fill="#1d9b98"/></svg></button>
  </div>
  <div class="tray">
    <svg viewBox="0 0 16 16"><path d="M2 11l6-6 6 6" fill="none" stroke="#fff" stroke-width="1.500"/></svg>
    <svg viewBox="0 0 16 16"><path d="M4 4h11v8H3V7M9 12v2.500M5.500 14.500h7" fill="none" stroke="#fff" stroke-width="1.200"/><path d="M.5 2h4v4h-4z" fill="none" stroke="#fff"/></svg>
    <svg viewBox="0 0 16 16"><path d="M1 6h2l4-3.500v11L3 10H1zM9 6q1.500 2 0 4M11 4q3 4 0 8M13 2.500q4 5.500 0 11" fill="none" stroke="#fff" stroke-width="1.100"/></svg>
    <time class="clock"><span>02:01 p. m.</span><span>02/04/2020</span></time>
    <button class="notes" aria-label="Notificaciones"><svg viewBox="0 0 16 16"><path d="M0 0h16v12h-6v4l-4-4H0z" fill="#fff"/><path d="M3 3.500h10M3 6h10M3 8.500h6" stroke="#1a2640"/></svg><b>3</b></button>
  </div>
</div>
</body>
</html>
```
FILE: styles.css
```css
* { box-sizing: border-box; }
body {
  margin: 0;
  height: 100vh;
  display: flex;
  flex-direction: column;
  overflow: hidden;
  background: #f7f7f7;
  color: #111;
  font: 11px/14px "Open Sans", "Noto Sans", sans-serif;
}
button {
  margin: 0;
  padding: 0;
  border: 0;
  background: none;
  color: inherit;
  font: inherit;
}
svg { display: block; flex: none; }
.defs { position: absolute; width: 0; height: 0; }
.caret { width: 6px; height: 4px; }
.i10 { width: 10px; height: 18px; }
.i14 { width: 14px; height: 14px; }
.i18 { width: 18px; height: 18px; }
.i20 { width: 20px; height: 18px; }

/* title bar */
.titlebar {
  display: flex;
  align-items: center;
  height: 31px;
  padding-top: 1px;
  border-bottom: 1px solid #858585;
  background: #f7f7f7;
  position: relative;
  z-index: 2;
}
.brand {
  align-self: flex-start;
  display: flex;
  align-items: center;
  width: 145px;
  height: 34px;
  margin-left: 10px;
  padding-left: 5px;
  gap: 5px;
  border: 1px solid #999;
  border-top: 0;
  background: linear-gradient(160deg, #fff 55%, #dcdcdc);
}
.brand-mark { width: 27px; height: 28px; margin-bottom: 6px; }
.brand-name { padding-top: 4px; color: #d9261c; font: italic 300 17px/20px "Open Sans", sans-serif; }
.brand-name b { font-weight: 700; }
.flyout { display: flex; align-items: center; width: 22px; height: 30px; padding-left: 8px; border-right: 2px solid #bbb; }
.flyout svg { width: 7px; height: 12px; }
.quick { display: flex; align-items: center; margin-left: 28px; }
.q { display: flex; justify-content: center; min-width: 26px; color: #333; }
.q-more { display: flex; justify-content: center; width: 13px; color: #333; }
.off { color: #b5b5b5; }
.select { display: flex; justify-content: center; align-items: center; width: 26px; height: 26px; border: 1px solid #777; background: #b3b3b3; }
.select svg { width: 14px; height: 18px; }
.select-more { display: flex; justify-content: center; align-items: center; width: 13px; height: 26px; border: 1px solid #777; border-left: 0; }
.doc-title { flex: 1; margin: 0; text-align: center; font-size: 11px; font-weight: 400; }
.help-search { display: flex; align-items: center; width: 252px; height: 23px; padding: 0 4px 0 5px; border: 1px solid #111; outline: 1px solid #11111140; outline-offset: -1px; background: #eeeff4; }
.help-search > svg { width: 16px; height: 16px; }
.help-search input { flex: 1; min-width: 0; padding: 0 0 0 5px; border: 0; outline: 0; background: none; font: inherit; }
.help-search input::placeholder { color: #666; opacity: 1; }
.help-search button svg:not(.caret) { width: 17px; height: 17px; }
.help-search .search-more { padding-left: 5px; }
.window-ctl { display: flex; align-items: center; color: #444; padding: 0 1px 0 4px; }
.window-ctl button { display: flex; justify-content: center; width: 26px; }
.window-ctl .q-more { width: 14px; }
.user { width: 14px; height: 18px; }
.window-ctl .help { width: 24px; font-size: 18px; line-height: 20px; font-weight: 700; }

/* ribbon */
.ribbon { display: flex; height: 87px; padding-top: 6px; border: solid #858585; border-width: 0 1px 1px 0; background: #f7f7f7; }
.group { display: grid; height: 79px; border-right: 1px solid #c6c6c6; }
.group:last-child { border-right: 0; }
.g1 { padding-left: 4px; grid-template-columns: 72px 84px 50px 98px 102px 62px 75px; }
.g2 { grid-template-columns: 82px; }
.g3 { grid-template-columns: 76px 64px; }
.g4 { grid-template-columns: 72px; }
.g5 { grid-template-columns: 64px; }
.g6 { grid-template-columns: 82px; }
.g7 { grid-template-columns: 48px; }
.g8 { grid-template-columns: 61px; }
.g9 { grid-template-columns: 73px 66px; }
.tool { display: flex; flex-direction: column; align-items: center; padding-top: 13px; line-height: 13px; white-space: nowrap; }
.tool svg { width: 18px; height: 18px; }
.tool span { margin: 1px -4px 0; text-align: center; }
.tool.drop { padding-top: 6px; }
.tool.drop::after { content: ""; margin-top: auto; margin-bottom: 9px; border: solid transparent; border-width: 4px 3px 0; border-top-color: #333; }
.tool.pressed { border: 1px solid #666; background: #b1b1b1; padding-top: 12px; }
.tool.off { color: #b5b5b5; }

/* graphics area */
.viewport {
  flex: 1;
  min-height: 0;
  position: relative;
  overflow: hidden;
  background:
    radial-gradient(ellipse 30% 58% at 84% 24%, #dadeea 0, #dde1ecb0 50%, #dfe2ed00 100%),
    radial-gradient(ellipse 34% 16% at 94% 50%, #dfe4f0 0, #e3e7f200 100%),
    radial-gradient(ellipse 34% 15% at 4% 48%, #eaedf5 0, #eaedf500 100%),
    radial-gradient(ellipse 26% 62% at 100% 18%, #ebebee 0, #ebebee00 100%),
    linear-gradient(#fff 72%, #f4f5fa);
}
.scene { position: absolute; inset: 0; width: 100%; height: 100%; }
.cell-text { font: 700 15px "DejaVu Sans Mono", monospace; }
.board-text { font: 700 10px "Liberation Sans", sans-serif; }
.axis { font: 12px "Liberation Mono", monospace; }
.axis-z { fill: #00f; }
.axis-x { fill: #f00; }
.view-head { position: relative; display: grid; grid-template-columns: 1fr auto 1fr; }
.cmd-tabs { display: grid; grid-template-columns: 77px 56px 56px 60px 189px 117px; justify-content: start; height: 22px; }
.tab { border: solid #858585; border-width: 0 1px 1px 0; background: #d6d6d6; white-space: nowrap; }
.tab.on { background: #fff; font-weight: 600; color: #333; border-bottom-color: #999; }
.view-tools { display: flex; align-items: center; height: 30px; gap: 2px; opacity: .85; }
.view-tools button { width: 24px; display: flex; justify-content: center; }
.view-tools button svg { width: 18px; height: 18px; }
.view-tools i { width: 12px; display: flex; justify-content: center; color: #999; }
.doc-ctl { display: flex; justify-content: flex-end; align-items: center; height: 30px; padding-right: 13px; gap: 12px; color: #999; }
.doc-ctl svg { width: 14px; height: 14px; }
.task-pane { position: absolute; right: 0; top: 50px; width: 26px; border: solid #858585; border-width: 1px 0 0 1px; }
.task-pane button { display: flex; justify-content: center; align-items: center; width: 100%; height: 24px; border-bottom: 1px solid #858585; background: #d4d4d4; }
.task-pane .on { background: #fff; }
.task-pane svg { width: 18px; height: 18px; }
.tree-handle { position: absolute; left: 0; top: 423px; width: 8px; height: 39px; border: 1px solid #999; border-left: 0; background: #f2f2f2; font-size: 8px; overflow: hidden; }

/* bottom tabs and status line */
.sheet-tabs { display: grid; grid-template-columns: 67px 64px 67px 161px; height: 16px; border: solid #858585; border-width: 1px 0; background: #f7f7f7; }
.steps { display: grid; grid-template-columns: repeat(4, 1fr); background: #b4b4b4; }
.steps button { display: flex; justify-content: center; align-items: center; border: 1px solid #8c8c8c; }
.steps svg { width: 12px; height: 10px; }
.sheet { border-right: 1px solid #858585; background: #d6d6d6; line-height: 14px; }
.sheet:last-child { padding-right: 8px; }
.sheet.on { background: #fff; font-weight: 700; }
.status { display: flex; align-items: center; height: 18px; padding: 0 3px 0 1px; background: #f7f7f7; }
.product { flex: 1; }
.cell { display: flex; align-items: center; height: 18px; padding: 0 6px 0 4px; border-right: 1px solid #d0d0d0; }
.cell.gap { width: 8px; padding: 0; }
.cell.lamp { width: 33px; padding-left: 18px; }
.cell.lamp svg { width: 8px; height: 14px; }
.units { display: flex; justify-content: space-between; align-items: center; width: 136px; margin-right: 66px; padding-left: 54px; }
.up { transform: rotate(180deg); }
.tag { width: 17px; height: 14px; }

/* windows task bar */
.taskbar { display: flex; height: 40px; background: linear-gradient(90deg, #20353d, #1d323f 60%, #1a2541 90%); color: #fff; }
.start { width: 48px; display: flex; justify-content: center; align-items: center; }
.start svg { width: 16px; height: 16px; }
.win-search { display: flex; align-items: center; gap: 11px; width: 344px; padding-left: 11px; border: 1px solid #bbb; background: #f2f2f2; }
.win-search svg { width: 17px; height: 17px; }
.win-search input { flex: 1; min-width: 0; padding: 0; border: 0; outline: 0; background: none; font: 14px/20px "Open Sans", sans-serif; }
.win-search input::placeholder { color: #444; opacity: 1; }
.apps { display: flex; flex: 1; }
.apps button { display: flex; justify-content: center; align-items: center; width: 49px; border-bottom: 2px solid transparent; }
.apps svg { width: 22px; height: 22px; }
.apps .big { width: 25px; height: 25px; }
.apps .run { background: linear-gradient(#76b9ed, #76b9ed) bottom / 40px 2px no-repeat border-box; }
.apps .now { background: linear-gradient(#76b9ed, #76b9ed) bottom / 100% 2px no-repeat border-box, #4e5f65; }
.sw { font: 700 11px "Liberation Sans", sans-serif; fill: #fff; }
.yr { font: 700 8px "Liberation Sans", sans-serif; fill: #fff; }
.tray { display: flex; align-items: center; gap: 8px; padding-right: 4px; }
.tray > svg { width: 16px; height: 16px; }
.clock { display: flex; flex-direction: column; align-items: center; width: 68px; font-size: 12px; line-height: 18px; margin-left: -2px; }
.notes { position: relative; width: 40px; height: 40px; border-right: 1px solid #66707e; }
.notes svg { width: 16px; height: 16px; margin-left: 8px; }
.notes b { position: absolute; left: 16px; top: 19px; width: 16px; height: 16px; border: 1px solid #888; border-radius: 8px; background: #333a44; font-size: 10px; line-height: 14px; }
```
